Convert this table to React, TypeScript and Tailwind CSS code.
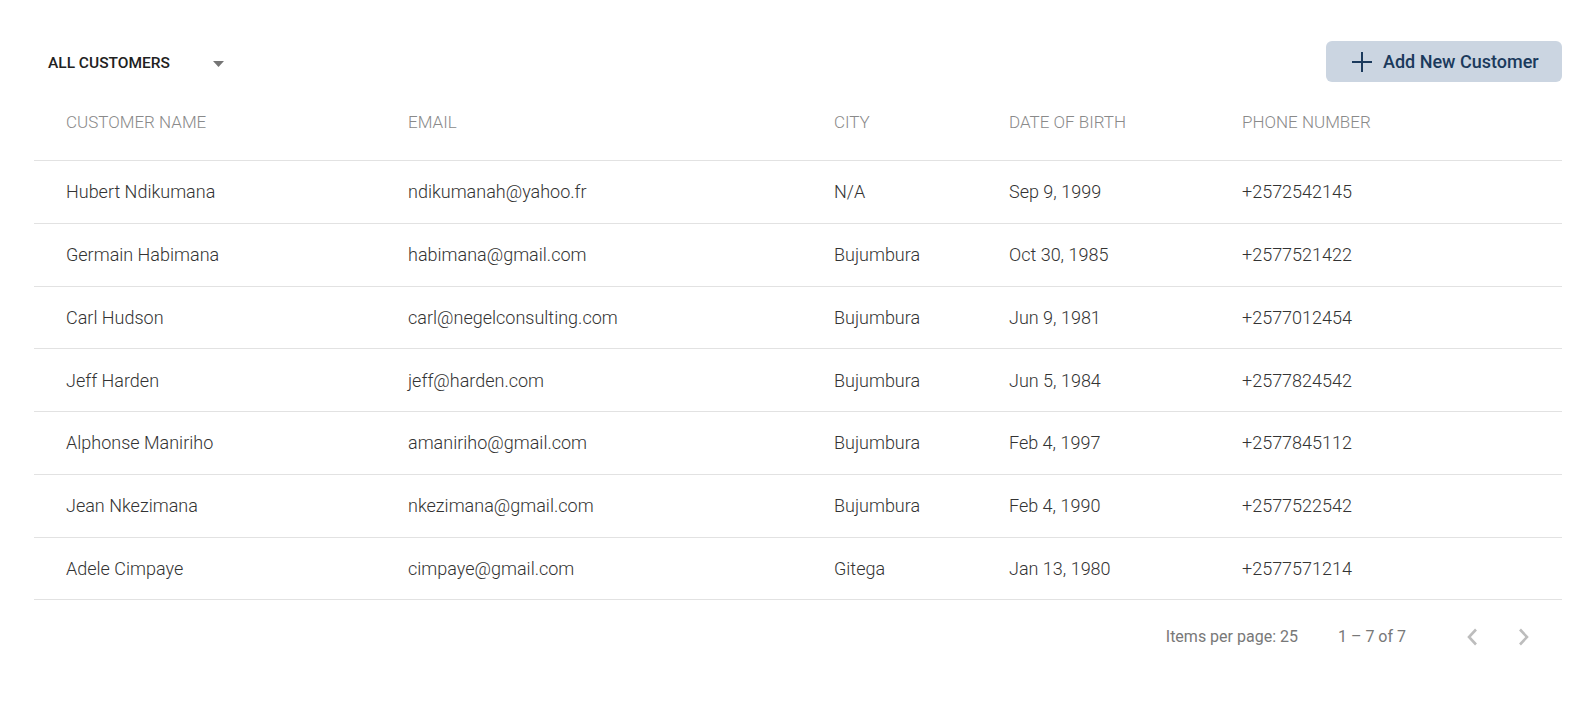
type Customer = {
  name: string;
  email: string;
  city: string;
  dob: string;
  phone: string;
};

const CUSTOMERS: Customer[] = [
  { name: "Hubert Ndikumana", email: "ndikumanah@yahoo.fr", city: "N/A", dob: "Sep 9, 1999", phone: "+2572542145" },
  { name: "Germain Habimana", email: "habimana@gmail.com", city: "Bujumbura", dob: "Oct 30, 1985", phone: "+2577521422" },
  { name: "Carl Hudson", email: "carl@negelconsulting.com", city: "Bujumbura", dob: "Jun 9, 1981", phone: "+2577012454" },
  { name: "Jeff Harden", email: "jeff@harden.com", city: "Bujumbura", dob: "Jun 5, 1984", phone: "+2577824542" },
  { name: "Alphonse Maniriho", email: "amaniriho@gmail.com", city: "Bujumbura", dob: "Feb 4, 1997", phone: "+2577845112" },
  { name: "Jean Nkezimana", email: "nkezimana@gmail.com", city: "Bujumbura", dob: "Feb 4, 1990", phone: "+2577522542" },
  { name: "Adele Cimpaye", email: "cimpaye@gmail.com", city: "Gitega", dob: "Jan 13, 1980", phone: "+2577571214" },
];

const COLS = "grid grid-cols-[374px_426px_175px_233px_1fr]";

export default function App() {
  return (
    <div className="min-h-[706px] bg-white pl-[34px] pr-[30px] pt-[41px] font-['Roboto','Liberation_Sans',sans-serif]">
      {/* Toolbar */}
      <div className="flex h-[41px] items-center justify-between">
        <div className="ml-[14px] flex items-center pt-[4px]">
          <span className="w-[122px] text-[15.5px] font-medium text-[#212121]">ALL CUSTOMERS</span>
          <svg className="ml-[43px]" width="11" height="6" viewBox="0 0 11 6">
            <path d="M0 0 L11 0 L5.5 6 Z" fill="#757575" />
          </svg>
        </div>
        <button className="flex h-[41px] w-[236px] items-center rounded-[6px] bg-[#cbd5e1] pl-[26px] text-[18px] font-medium text-[#1b3a5c]">
          <svg width="20" height="20" viewBox="0 0 20 20">
            <path d="M10 0 V20 M0 10 H20" stroke="#1b3a5c" strokeWidth="2" />
          </svg>
          <span className="ml-[11px]">Add New Customer</span>
        </button>
      </div>

      {/* Header */}
      <div className={`${COLS} h-[79px] items-center border-b border-[#e2e2e2] pt-[4px] text-[17px] font-light text-[#8a8a8a]`}>
        <div className="pl-[32px]">CUSTOMER NAME</div>
        <div>EMAIL</div>
        <div>CITY</div>
        <div>DATE OF BIRTH</div>
        <div>PHONE NUMBER</div>
      </div>

      {/* Rows */}
      {CUSTOMERS.map((c) => (
        <div
          key={c.email}
          className={`${COLS} h-[62.75px] items-center border-b border-[#e2e2e2] text-[18px] font-light text-[#333333]`}
        >
          <div className="pl-[32px]">{c.name}</div>
          <div>{c.email}</div>
          <div>{c.city}</div>
          <div>{c.dob}</div>
          <div>{c.phone}</div>
        </div>
      ))}

      {/* Paginator */}
      <div className="flex h-[74px] items-center justify-end text-[16px] text-[#787878]">
        <span>Items per page: 25</span>
        <span className="ml-[40px]">1 – 7 of 7</span>
        <button className="ml-[46px] flex h-[40px] w-[40px] items-center justify-center">
          <svg width="14" height="18" viewBox="0 0 14 18">
            <path d="M11 1.5 L4 9 L11 16.5" fill="none" stroke="#bdbdbd" strokeWidth="2.6" />
          </svg>
        </button>
        <button className="ml-[12px] mr-[18px] flex h-[40px] w-[40px] items-center justify-center">
          <svg width="14" height="18" viewBox="0 0 14 18">
            <path d="M3 1.5 L10 9 L3 16.5" fill="none" stroke="#bdbdbd" strokeWidth="2.6" />
          </svg>
        </button>
      </div>
    </div>
  );
}
